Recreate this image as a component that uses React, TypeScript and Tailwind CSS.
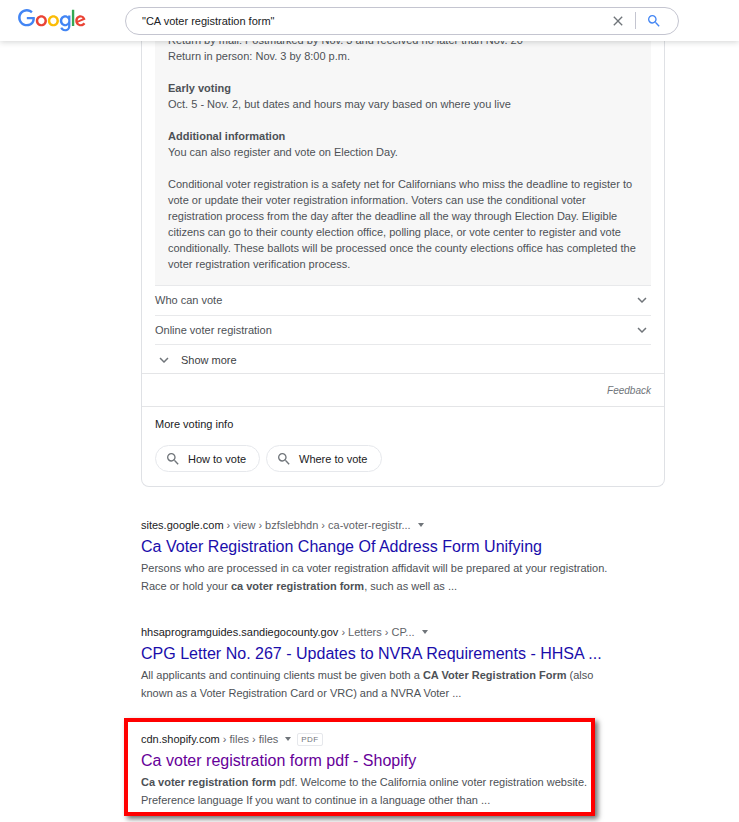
const paragraphs = [
  { lines: ["Return by mail: Postmarked by Nov. 3 and received no later than Nov. 20", "Return in person: Nov. 3 by 8:00 p.m."] },
  { title: "Early voting", lines: ["Oct. 5 - Nov. 2, but dates and hours may vary based on where you live"] },
  { title: "Additional information", lines: ["You can also register and vote on Election Day."] },
  {
    lines: [
      "Conditional voter registration is a safety net for Californians who miss the deadline to register to vote or update their voter registration information. Voters can use the conditional voter registration process from the day after the deadline all the way through Election Day. Eligible citizens can go to their county election office, polling place, or vote center to register and vote conditionally. These ballots will be processed once the county elections office has completed the voter registration verification process.",
    ],
  },
];

function GoogleLogo() {
  return (
    <svg viewBox="0 0 272 92" className="w-[68px] h-[23px] shrink-0">
      <path fill="#EA4335" d="M115.75 47.18c0 12.77-9.99 22.18-22.25 22.18s-22.25-9.41-22.25-22.18C71.25 34.32 81.24 25 93.5 25s22.25 9.32 22.25 22.18zm-9.74 0c0-7.98-5.79-13.44-12.51-13.44S80.99 39.2 80.99 47.18c0 7.9 5.79 13.44 12.51 13.44s12.51-5.55 12.51-13.44z" />
      <path fill="#FBBC05" d="M163.75 47.18c0 12.77-9.99 22.18-22.25 22.18s-22.25-9.41-22.25-22.18c0-12.85 9.99-22.18 22.25-22.18s22.25 9.32 22.25 22.18zm-9.74 0c0-7.98-5.79-13.44-12.51-13.44s-12.51 5.46-12.51 13.44c0 7.9 5.79 13.44 12.51 13.44s12.51-5.55 12.51-13.44z" />
      <path fill="#4285F4" d="M209.75 26.34v39.82c0 16.38-9.66 23.07-21.08 23.07-10.75 0-17.22-7.19-19.66-13.07l8.48-3.53c1.51 3.61 5.21 7.87 11.17 7.87 7.31 0 11.84-4.51 11.84-13v-3.19h-.34c-2.18 2.69-6.38 5.04-11.68 5.04-11.09 0-21.25-9.66-21.25-22.09 0-12.52 10.16-22.26 21.25-22.26 5.29 0 9.49 2.35 11.68 4.96h.34v-3.61h9.25zm-8.56 20.92c0-7.81-5.21-13.52-11.84-13.52-6.72 0-12.35 5.71-12.35 13.52 0 7.73 5.63 13.36 12.35 13.36 6.63 0 11.84-5.63 11.84-13.36z" />
      <path fill="#34A853" d="M225 3v65h-9.5V3h9.5z" />
      <path fill="#EA4335" d="M262.02 54.48l7.56 5.04c-2.44 3.61-8.32 9.83-18.48 9.83-12.6 0-22.01-9.74-22.01-22.18 0-13.19 9.49-22.18 20.92-22.18 11.51 0 17.14 9.16 18.98 14.11l1.01 2.52-29.65 12.28c2.27 4.45 5.8 6.72 10.75 6.72 4.96 0 8.4-2.44 10.92-6.14zm-23.27-7.98l19.82-8.23c-1.09-2.77-4.37-4.7-8.23-4.7-4.95 0-11.84 4.37-11.59 12.93z" />
      <path fill="#4285F4" d="M35.29 41.41V32H67c.31 1.64.47 3.58.47 5.68 0 7.06-1.93 15.79-8.15 22.01-6.05 6.3-13.78 9.66-24.02 9.66C16.32 69.35.36 53.89.36 34.91.36 15.93 16.32.47 35.3.47c10.5 0 17.98 4.12 23.6 9.49l-6.64 6.64c-4.03-3.78-9.49-6.72-16.97-6.72-13.86 0-24.7 11.17-24.7 25.03 0 13.86 10.84 25.03 24.7 25.03 8.99 0 14.11-3.61 17.39-6.89 2.66-2.66 4.41-6.46 5.1-11.65l-22.49.01z" />
    </svg>
  );
}

function SearchIcon({ className }: { className: string }) {
  return (
    <svg viewBox="0 0 24 24" className={className} fill="currentColor">
      <path d="M15.5 14h-.79l-.28-.27A6.471 6.471 0 0 0 16 9.5 6.5 6.5 0 1 0 9.5 16c1.61 0 3.09-.59 4.23-1.57l.27.28v.79l5 4.99L20.49 19l-4.99-5zm-6 0C7.01 14 5 11.99 5 9.5S7.01 5 9.5 5 14 7.01 14 9.5 11.99 14 9.5 14z" />
    </svg>
  );
}

function Chevron() {
  return (
    <svg viewBox="0 0 24 24" className="w-[18px] h-[18px] shrink-0 text-[#70757a]" fill="currentColor">
      <path d="M16.59 8.59 12 13.17 7.41 8.59 6 10l6 6 6-6z" />
    </svg>
  );
}

function Caret() {
  return <span className="inline-block ml-[7px] w-0 h-0 border-x-[3.5px] border-x-transparent border-t-[4px] border-t-[#70757a]" />;
}

function Chip({ label, width }: { label: string; width: string }) {
  return (
    <div className={`flex items-center h-[27px] pl-[9px] border border-[#e6e8ec] rounded-full text-[#202124] ${width}`}>
      <SearchIcon className="w-[16px] h-[16px] text-[#70757a] mr-[7px]" />
      <span>{label}</span>
    </div>
  );
}

export default function App() {
  return (
    <div className="relative w-[739px] h-[822px] overflow-hidden bg-white font-['Liberation_Sans',Arial,sans-serif] text-[11px] leading-[16px] text-[#4d5156]">
      <header className="relative z-10 flex items-center h-[41px] pl-[18px] bg-white shadow-[0_1px_6px_rgba(32,33,36,0.2)]">
        <GoogleLogo />
        <div className="flex items-center w-[554px] h-[28px] ml-[39px] pl-[16px] border border-[#c4c5d0] rounded-full bg-white">
          <span className="flex-1 text-[#202124]">"CA voter registration form"</span>
          <svg viewBox="0 0 24 24" className="w-[16px] h-[16px] text-[#70757a]" fill="currentColor">
            <path d="M19 6.41 17.59 5 12 10.59 6.41 5 5 6.41 10.59 12 5 17.59 6.41 19 12 13.41 17.59 19 19 17.59 13.41 12z" />
          </svg>
          <div className="w-px h-[17px] ml-[9px] bg-[#c4c5d0]" />
          <SearchIcon className="w-[16px] h-[16px] ml-[10px] mr-[16px] text-[#4285f4]" />
        </div>
      </header>

      <main className="w-[524px] ml-[141px] -mt-[9px]">
        <section className="h-[455px] border-x border-b border-[#dfe1e5] rounded-b-[8px]">
          <div className="mx-[13px]">
            <div className="flex flex-col gap-[16px] h-[253px] px-[13px] bg-[#f7f7f7]">
              {paragraphs.map((p, i) => (
                <div key={i}>
                  {p.title && <div className="font-bold">{p.title}</div>}
                  {p.lines.map((line) => (
                    <div key={line}>{line}</div>
                  ))}
                </div>
              ))}
            </div>
            <div className="flex items-center justify-between h-[30px] pb-px border-t border-[#e8e9eb]">
              <span>Who can vote</span>
              <Chevron />
            </div>
            <div className="flex items-center justify-between h-[29px] border-t border-[#e8e9eb]">
              <span>Online voter registration</span>
              <Chevron />
            </div>
            <div className="flex items-center h-[29px] pt-px border-t border-[#e8e9eb] text-[#3c4043]">
              <Chevron />
              <span className="ml-[8px]">Show more</span>
            </div>
          </div>
          <div className="flex items-center justify-end h-[33px] pr-[13px] pt-px border-t border-[#e4e5e7] text-[10px] italic text-[#70757a]">
            Feedback
          </div>
          <div className="px-[13px] border-t border-[#e4e5e7]">
            <div className="mt-[9px] text-[#202124]">More voting info</div>
            <div className="flex gap-[6px] mt-[13px]">
              <Chip label="How to vote" width="w-[105px]" />
              <Chip label="Where to vote" width="w-[116px]" />
            </div>
          </div>
        </section>

        <article className="mt-[29px] leading-[18px]">
          <div className="flex items-center h-[18px]">
            <span className="text-[#202124]">sites.google.com</span>
            <span className="text-[#5f6368]">&nbsp;› view › bzfslebhdn › ca-voter-registr...</span>
            <Caret />
          </div>
          <h3 className="mt-[2px] text-[16.05px] leading-[21px] text-[#1a0dab]">Ca Voter Registration Change Of Address Form Unifying</h3>
          <p className="mt-[2px]">
            Persons who are processed in ca voter registration affidavit will be prepared at your registration.
            <br />
            Race or hold your <b>ca voter registration form</b>, such as well as ...
          </p>
        </article>

        <article className="mt-[28px] leading-[18px]">
          <div className="flex items-center h-[18px]">
            <span className="text-[#202124]">hhsaprogramguides.sandiegocounty.gov</span>
            <span className="text-[#5f6368]">&nbsp;› Letters › CP...</span>
            <Caret />
          </div>
          <h3 className="mt-[2px] text-[16.05px] leading-[21px] text-[#1a0dab]">CPG Letter No. 267 - Updates to NVRA Requirements - HHSA ...</h3>
          <p className="mt-[2px]">
            All applicants and continuing clients must be given both a <b>CA Voter Registration Form</b> (also
            <br />
            known as a Voter Registration Card or VRC) and a NVRA Voter ...
          </p>
        </article>

        <article className="w-[471px] h-[98px] -ml-[17px] mt-[16px] pl-[13px] pt-[8px] border-4 border-[#ff0000] leading-[18px] shadow-[3px_3px_5px_rgba(0,0,0,0.55)]">
          <div className="flex items-center h-[18px]">
            <span className="text-[#202124]">cdn.shopify.com</span>
            <span className="text-[#5f6368]">&nbsp;› files › files</span>
            <Caret />
            <span className="ml-[6px] px-[3px] border border-[#e6e8ec] rounded-[2px] text-[8px] leading-[11px] tracking-[0.4px] text-[#70757a]">PDF</span>
          </div>
          <h3 className="mt-[2px] text-[16.05px] leading-[21px] text-[#660099]">Ca voter registration form pdf - Shopify</h3>
          <p className="mt-[2px]">
            <b>Ca voter registration form</b> pdf. Welcome to the California online voter registration website.
            <br />
            Preference language If you want to continue in a language other than ...
          </p>
        </article>
      </main>
    </div>
  );
}
